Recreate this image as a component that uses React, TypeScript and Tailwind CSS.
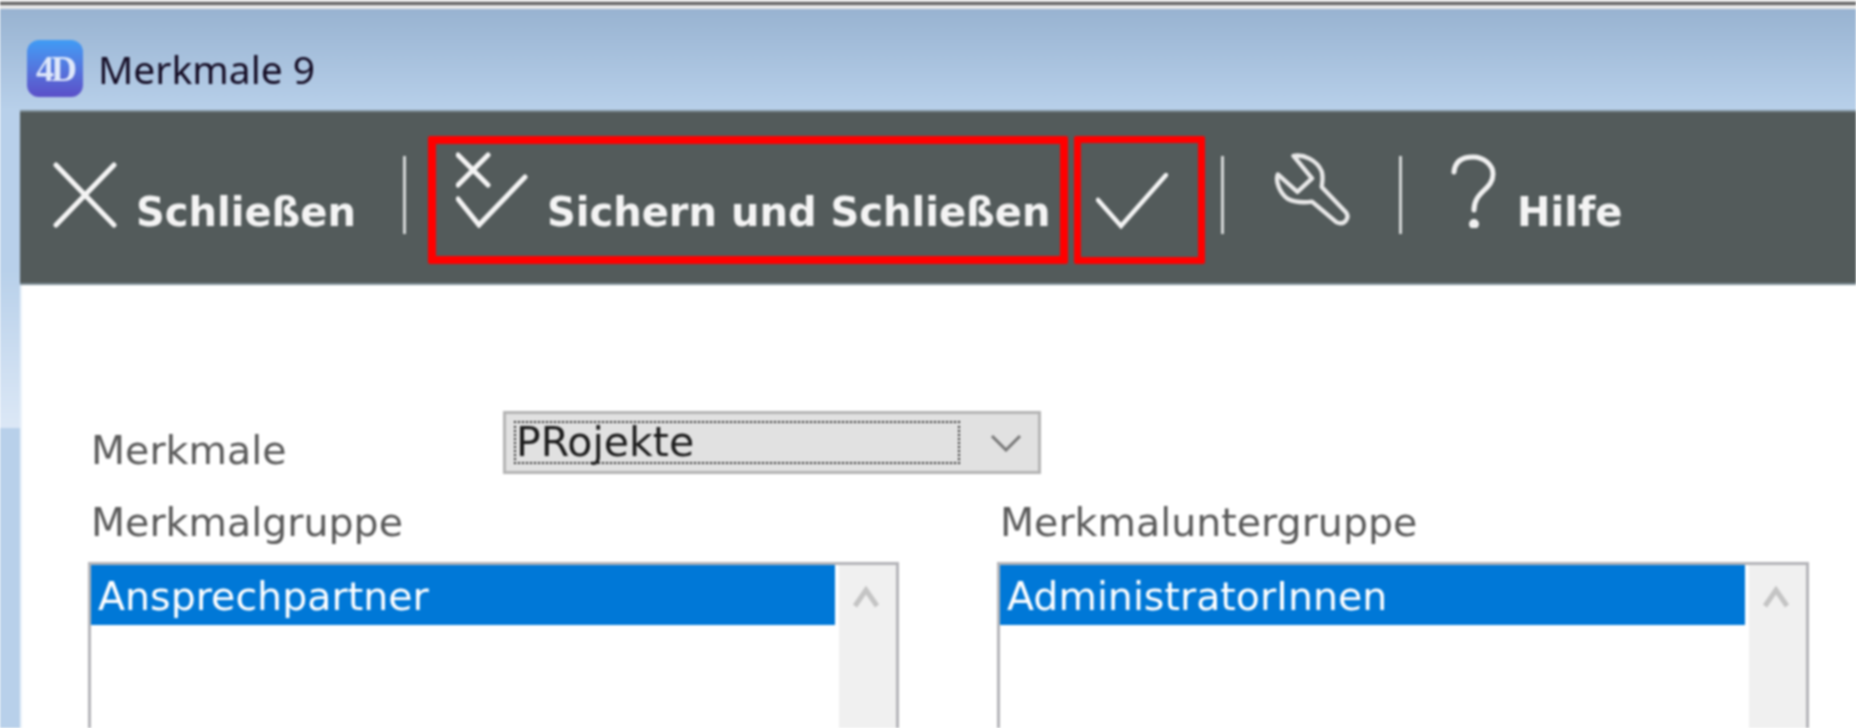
import React from "react";

const dv = { fontFamily: '"DejaVu Sans", Verdana, sans-serif' };

function Sep() {
  return <div className="w-[3px] h-[78px] mb-[11px] bg-[#d5d8d8] shrink-0" />;
}

function ListBox({ label, item, w }: { label: string; item: string; w: string }) {
  return (
    <div className={`flex flex-col ${w}`}>
      <div className="text-[39.5px] leading-[44px] text-[#5a5a5a] pl-[3px] h-[62px] whitespace-nowrap">{label}</div>
      <div className="h-[200px] border-[3px] border-[#b4b4b8] border-b-0 flex">
        <div className="flex-1 h-[60px] bg-[#0078d7] text-white text-[39.5px] leading-[62px] pl-[7px] whitespace-nowrap">{item}</div>
        <div className="w-[57px] ml-[4px] bg-[#f0f0f0] flex justify-center pt-[21px] pr-[4px]">
          <svg width="28" height="22" viewBox="0 0 28 22" fill="none" stroke="#c4c4c4" strokeWidth="5">
            <path d="M3 20 14 4l11 16" />
          </svg>
        </div>
      </div>
    </div>
  );
}

export default function App() {
  return (
    <div className="h-[728px] w-[1856px] overflow-hidden bg-[#b8d0ea] flex flex-col blur-[0.8px]" style={dv}>
      <div className="h-[9px] bg-[#e8e8e8] shrink-0 pt-[2px]">
        <div className="h-[3px] bg-[#5f5f5f]" />
      </div>
      <div className="h-[101px] shrink-0 bg-gradient-to-b from-[#98b3d1] to-[#b8d0ea] flex items-end pl-[27px] pb-[13px]">
        <div className="w-[56px] h-[57px] rounded-[12px] bg-gradient-to-b from-[#3f9cf5] to-[#5a4fc8] flex items-center justify-center">
          <span className="text-[#dfe8fa] text-[36px] font-bold tracking-[-3px]" style={{ fontFamily: '"Liberation Serif", serif' }}>4D</span>
        </div>
        <span className="ml-[15px] mb-[3px] text-[39px] leading-[50px] text-[#140c24]" style={{ fontFamily: '"Noto Sans", sans-serif' }}>Merkmale 9</span>
      </div>
      <div className="flex-1 flex">
        <div className="w-[20px] shrink-0 flex flex-col">
          <div className="h-[318px] bg-gradient-to-b from-[#b8d0ea] from-[50%] to-[#dce8f6]" />
          <div className="flex-1 bg-[#b8d0ea]" />
        </div>
        <div className="flex-1 flex flex-col bg-white">
          <div className="h-[175px] shrink-0 bg-[#535b5b] border-t-2 border-b-2 border-[#7f8f98] pt-[5px] flex items-center text-[#f4f4f4]">
            <div className="flex items-end pl-[33px] w-[383px] h-[128px] pb-[36px]">
              <svg width="64" height="66" viewBox="0 0 64 66" fill="none" stroke="#f4f4f4" strokeWidth="5" strokeLinecap="round" className="shrink-0">
                <path d="M3 3 61 63M61 3 3 63" />
              </svg>
              <span className="ml-[19px] text-[40px] leading-[32px] font-bold whitespace-nowrap">Schließen</span>
            </div>
            <Sep />
            <div className="ml-[22px] w-[640px] h-[128px] border-[8px] border-[#ff0000] rounded-[2px] flex items-end pb-[28px] pl-[20px] shrink-0">
              <svg width="72" height="76" viewBox="0 0 72 76" fill="none" stroke="#f4f4f4" strokeWidth="5" strokeLinecap="round" className="shrink-0">
                <path d="M2 3 32 33M32 3 2 33" />
                <path d="M2 47 23 73 69 25" />
              </svg>
              <span className="ml-[19px] text-[40px] leading-[32px] font-bold whitespace-nowrap">Sichern und Schließen</span>
            </div>
            <div className="ml-[6px] w-[131px] h-[128px] border-[7px] border-[#ff0000] rounded-[2px] flex items-end pb-[28px] pl-[15px] shrink-0">
              <svg width="72" height="56" viewBox="0 0 72 56" fill="none" stroke="#f4f4f4" strokeWidth="4.5" strokeLinecap="round">
                <path d="M2 27 25 53 70 2" />
              </svg>
            </div>
            <div className="ml-[16px]"><Sep /></div>
            <div className="w-[175px] flex justify-center shrink-0 mb-[20px]">
              <svg width="76" height="76" viewBox="-2 -2 78 78" fill="none" stroke="#e8e8e8" strokeWidth="4.5" strokeLinejoin="round" strokeLinecap="round">
                <path d="M18 2C28 0 42 6 47 18c2 8 0 12 0 16l25 26c4 6-2 14-10 10L37 49c-7 1-17 1-25-3C4 40-1 28 2 21l20 18 15-14z" />
              </svg>
            </div>
            <Sep />
            <div className="ml-[49px] flex items-end h-[128px] pb-[36px] shrink-0">
              <svg width="46" height="74" viewBox="0 0 46 74" fill="none" stroke="#f0f0f0" strokeWidth="5" strokeLinecap="round" className="shrink-0">
                <path d="M3 18C4 7 12 3 22 3c11 0 20 8 20 17 0 16-19 17-19 36" />
                <circle cx="23" cy="70" r="2.5" fill="#f0f0f0" />
              </svg>
              <span className="ml-[20px] text-[40px] leading-[32px] font-bold">Hilfe</span>
            </div>
          </div>
          <div className="flex-1 border-l-2 border-[#eaf2fa] pl-[66px] pt-[126px]">
            <div className="flex h-[64px]">
              <div className="w-[415px] text-[39.5px] leading-[44px] text-[#5a5a5a] pl-[3px] pt-[17px]">Merkmale</div>
              <div className="w-[538px] h-[63px] border-[3px] border-[#b4b4b4] bg-[#e1e1e1] flex items-center pl-[8px] pr-[16px]">
                <div className="w-[446px] h-[43px] border-2 border-dotted border-[#222] text-[41px] leading-[38px] text-[#1c1c1c] whitespace-nowrap">PRojekte</div>
                <svg width="32" height="18" viewBox="0 0 32 18" fill="none" stroke="#777" strokeWidth="3" className="ml-auto">
                  <path d="M2 2 16 16 30 2" />
                </svg>
              </div>
            </div>
            <div className="flex gap-[98px] pt-[25px]">
              <ListBox label="Merkmalgruppe" item="Ansprechpartner" w="w-[811px]" />
              <ListBox label="Merkmaluntergruppe" item="AdministratorInnen" w="w-[812px]" />
            </div>
          </div>
        </div>
      </div>
    </div>
  );
}
